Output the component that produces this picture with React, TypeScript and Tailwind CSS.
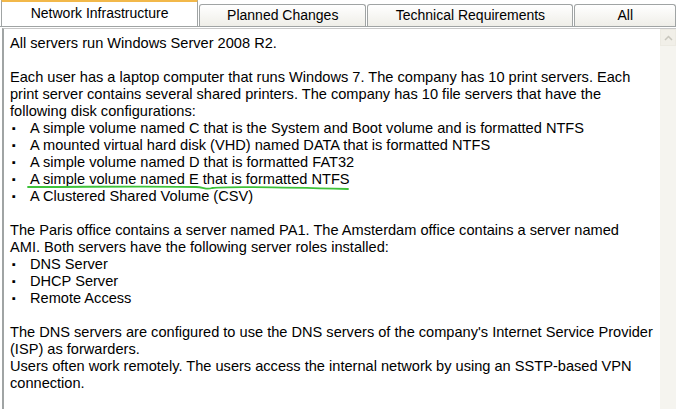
import React from "react";

const tabs = [
  { label: "Planned Changes", w: "w-[168px]" },
  { label: "Technical Requirements", w: "w-[207px]" },
  { label: "All", w: "w-[102px]" },
];

const disks = [
  "A simple volume named C that is the System and Boot volume and is formatted NTFS",
  "A mounted virtual hard disk (VHD) named DATA that is formatted NTFS",
  "A simple volume named D that is formatted FAT32",
  "A simple volume named E that is formatted NTFS",
  "A Clustered Shared Volume (CSV)",
];

const roles = ["DNS Server", "DHCP Server", "Remote Access"];

function Bullets({ items }: { items: string[] }) {
  return (
    <ul>
      {items.map((t) => (
        <li key={t} className="flex h-[17px] items-center">
          <span className="w-[20px] pl-[2px] text-[11px]">▪</span>
          <span>{t}</span>
        </li>
      ))}
    </ul>
  );
}

export default function App() {
  return (
    <div className="relative h-[409px] w-[676px] overflow-hidden bg-white text-black [font-family:'Liberation_Sans',Arial,sans-serif]">
      {/* tabs */}
      <div className="flex h-[27px] items-end border-b border-[#a0a4a4] pl-[1px]">
        <div className="flex h-[27px] w-[198px] items-center justify-center border-x border-t-[3px] border-[#a0a4a4] border-t-[#f2b84a] bg-white pb-[2px] text-[14px]">
          Network Infrastructure
        </div>
        {tabs.map((t) => (
          <div
            key={t.label}
            className={`${t.w} ml-[1px] flex h-[22px] items-center justify-center rounded-t-[3px] border-x border-t border-[#a0a4a4] bg-gradient-to-b from-white to-[#efeee8] text-[14px]`}
          >
            {t.label}
          </div>
        ))}
      </div>

      {/* panel */}
      <div className="mt-[1px] ml-[2px] flex h-[381px] border-l-[2px] border-t border-l-[#a0a4a4] border-t-[#c8c8c8]">
        <div className="relative flex-1 pl-[6px] pt-[6px] text-[14.6px] leading-[17px]">
          <p>All servers run Windows Server 2008 R2.</p>
          <p className="mt-[17px]">
            Each user has a laptop computer that runs Windows 7. The company has 10 print servers. Each
            <br />
            print server contains several shared printers. The company has 10 file servers that have the
            <br />
            following disk configurations:
          </p>
          <Bullets items={disks} />
          <p className="mt-[17px]">
            The Paris office contains a server named PA1. The Amsterdam office contains a server named
            <br />
            AMI. Both servers have the following server roles installed:
          </p>
          <Bullets items={roles} />
          <p className="mt-[17px]">
            The DNS servers are configured to use the DNS servers of the company's Internet Service Provider
            <br />
            (ISP) as forwarders.
            <br />
            Users often work remotely. The users access the internal network by using an SSTP-based VPN
            <br />
            connection.
          </p>

          {/* green pen underline */}
          <svg
            className="absolute left-[22px] top-[155px]"
            width="330"
            height="8"
            viewBox="0 0 330 8"
            fill="none"
          >
            <path
              d="M2 3 C60 3 120 2 170 3 C178 3 180 6 186 4 C200 2 250 3 322 5"
              stroke="#3ec23a"
              strokeWidth="1.8"
              strokeLinecap="round"
            />
          </svg>
        </div>

        {/* scrollbar */}
        <div className="flex w-[16px] flex-col bg-[#f5f4ef]">
          <div className="flex h-[17px] items-center justify-center border border-[#eceae2] bg-[#f1efe8]">
            <svg width="9" height="6" viewBox="0 0 9 6">
              <path d="M1 5 L4.5 1.5 L8 5" stroke="#c8c6bd" strokeWidth="1.5" fill="none" />
            </svg>
          </div>
        </div>
      </div>
    </div>
  );
}
